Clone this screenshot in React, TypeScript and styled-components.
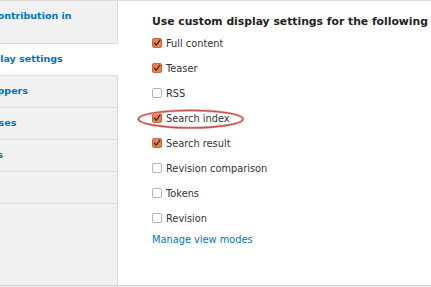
import React from "react";
import styled, { createGlobalStyle } from "styled-components";

const GlobalStyle = createGlobalStyle`
  html, body { margin: 0; padding: 0; }
  body {
    background: #ececec;
    font-family: "DejaVu Sans", Verdana, sans-serif;
    overflow: hidden;
  }
`;

const Frame = styled.div`
  display: flex;
  height: 286px;
  box-sizing: border-box;
  border-top: 1px solid #dcdcdc;
  border-bottom: 1px solid #d6d6d6;
  background: #fff;
`;

const TabNav = styled.nav`
  width: 118px;
  flex: none;
  overflow: hidden;
  display: flex;
  flex-direction: column;
  background: #f1f1f1;
`;

const TabList = styled.ul`
  list-style: none;
  margin: 0 0 0 -66px;
  padding: 0;
  width: calc(100% + 66px);
`;

const Tab = styled.li<{ $active?: boolean }>`
  box-sizing: border-box;
  padding: 9px 0 11px 0;
  line-height: 11px;
  font-size: 9.5px;
  font-weight: bold;
  white-space: nowrap;
  color: #0074bd;
  background: ${(p) => (p.$active ? "#fff" : "#f1f1f1")};
  border-bottom: 1px solid #dadada;
  border-right: 1px solid ${(p) => (p.$active ? "#fff" : "#d9d9d9")};
`;

const TabLine = styled.span`
  display: block;
`;

const TabFill = styled.div`
  flex: 1;
  border-right: 1px solid #d9d9d9;
`;

const Panel = styled.section`
  flex: 1;
  padding: 14px 0 0 34px;
  color: #333;
`;

const Heading = styled.h3`
  margin: 0;
  font-size: 10.8px;
  line-height: 14px;
  font-weight: bold;
  color: #222;
  white-space: nowrap;
`;

const OptionList = styled.ul`
  list-style: none;
  margin: 2px 0 0;
  padding: 0;
`;

const Option = styled.li`
  position: relative;
  height: 25px;
  display: flex;
  align-items: center;
  font-size: 9.8px;
  color: #333;
`;

const Box = styled.span<{ $checked?: boolean }>`
  box-sizing: border-box;
  width: 10px;
  height: 10px;
  margin: -1px 4px 0 0;
  flex: none;
  border-radius: 2px;
  border: 1px solid ${(p) => (p.$checked ? "#c8663a" : "#b4b4b4")};
  background: ${(p) => (p.$checked ? "#e9824f" : "#fff")};
  display: flex;
  align-items: center;
  justify-content: center;
`;

const Halo = styled.svg`
  position: absolute;
  left: -17px;
  top: 0.5px;
  pointer-events: none;
`;

const ManageLink = styled.a`
  display: block;
  margin-top: 2px;
  line-height: 14px;
  font-size: 9.8px;
  color: #0074bd;
  text-decoration: none;
`;

const options: { label: string; checked: boolean; circled?: boolean }[] = [
  { label: "Full content", checked: true },
  { label: "Teaser", checked: true },
  { label: "RSS", checked: false },
  { label: "Search index", checked: true, circled: true },
  { label: "Search result", checked: true },
  { label: "Revision comparison", checked: false },
  { label: "Tokens", checked: false },
  { label: "Revision", checked: false },
];

function Check() {
  return (
    <svg width="8" height="8" viewBox="0 0 8 8">
      <path d="M1 3.6 L3.2 6.2 L7.2 0.8" fill="none" stroke="#3a2a22" strokeWidth="1.2" />
    </svg>
  );
}

export default function App() {
  return (
    <>
      <GlobalStyle />
      <Frame>
        <TabNav>
          <TabList>
            <Tab>
              <TabLine>Layout for contribution in</TabLine>
              <TabLine>default</TabLine>
            </Tab>
            <Tab $active>Custom display settings</Tab>
            <Tab>Custom wrappers</Tab>
            <Tab>Custom classes</Tab>
            <Tab>Custom links</Tab>
            <Tab>Revisions</Tab>
          </TabList>
          <TabFill />
        </TabNav>
        <Panel>
          <Heading>Use custom display settings for the following view modes</Heading>
          <OptionList>
            {options.map((o) => (
              <Option key={o.label}>
                <Box $checked={o.checked}>{o.checked && <Check />}</Box>
                {o.label}
                {o.circled && (
                  <Halo width="112" height="24" viewBox="0 0 112 24">
                    <ellipse cx="55.7" cy="12.1" rx="52.3" ry="8.7" fill="none" stroke="#e8b4b4" strokeWidth="2.6" />
                    <ellipse cx="55.7" cy="12.1" rx="52.3" ry="8.7" fill="none" stroke="#c4534f" strokeWidth="1.3" />
                  </Halo>
                )}
              </Option>
            ))}
          </OptionList>
          <ManageLink href="#">Manage view modes</ManageLink>
        </Panel>
      </Frame>
    </>
  );
}
